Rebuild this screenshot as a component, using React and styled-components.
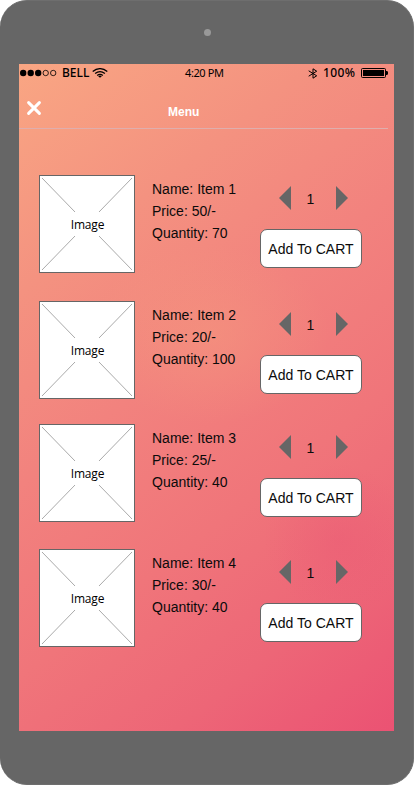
import React from "react";
import styled, { createGlobalStyle } from "styled-components";

const GlobalStyle = createGlobalStyle`
  * { box-sizing: border-box; }
  body {
    margin: 0;
    background: #fff;
    font-family: "Liberation Sans", Arial, sans-serif;
    color: #0b0b0b;
  }
  button { font: inherit; color: inherit; padding: 0; border: 0; background: none; }
`;

const Phone = styled.main`
  width: 414px;
  height: 785px;
  padding: 0 18px 0 19px;
  border: 1px solid #6e6e6e;
  border-width: 1px 1px 1px 0;
  border-radius: 27px;
  background: #666;
`;

const Bezel = styled.div`
  height: 63px;
  display: flex;
  justify-content: center;
  padding-top: 28px;
`;

const Camera = styled.span`
  width: 7px;
  height: 7px;
  border-radius: 50%;
  background: #999;
`;

const Screen = styled.div`
  width: 375px;
  height: 667px;
  overflow: hidden;
  background:
    radial-gradient(ellipse 75px 75px at 320px 475px, rgba(232, 75, 115, 0.25), transparent),
    radial-gradient(ellipse 120px 90px at 190px 270px, rgba(245, 153, 125, 0.5), transparent),
    linear-gradient(142deg, #f9a683 0%, #f49280 24%, #f2827e 44%, #f0757a 64%, #ed6677 82%, #eb5273 100%);
`;

const StatusBar = styled.header`
  height: 18px;
  display: grid;
  grid-template-columns: 165px 1fr auto;
  align-items: center;
  padding: 0 6px 0 1px;
  font-family: "Noto Sans", "Open Sans", sans-serif;
  color: #000;
`;

const StatusGroup = styled.div`
  display: flex;
  align-items: center;
  svg { display: block; flex: none; }
`;

const StatusText = styled.span`
  width: ${(p) => p.$width}px;
  margin-left: ${(p) => p.$gap || 0}px;
  font-size: ${(p) => p.$size}px;
  font-weight: ${(p) => p.$weight || 400};
  letter-spacing: ${(p) => p.$tracking || 0}px;
  line-height: 18px;
  white-space: nowrap;
`;

const NavBar = styled.nav`
  width: 369px;
  height: 47px;
  display: grid;
  grid-template-columns: 149px 1fr;
  align-items: start;
  border-bottom: 1px solid #dfaead;
`;

const CloseButton = styled.button`
  width: 16px;
  height: 16px;
  margin: 18px 0 0 7px;
  svg { display: block; }
`;

const Title = styled.h1`
  margin: 23px 0 0;
  font-size: 12px;
  line-height: 14px;
  font-weight: 700;
  color: #fff;
`;

const List = styled.ul`
  margin: 0;
  padding: 46px 32px 0 20px;
  list-style: none;
`;

const Row = styled.li`
  display: grid;
  grid-template-columns: 113px 108px 102px;
  height: ${(p) => p.$height}px;
  align-items: start;
`;

const Thumb = styled.div`
  width: 96px;
  height: 98px;
  display: grid;
  place-items: center;
  border: 1px solid #666;
  background: #fff;
  > * { grid-area: 1 / 1; }
`;

const ThumbLabel = styled.span`
  padding: 2px 0 0 1px;
  font: 12px/16px "Open Sans", "Noto Sans", sans-serif;
  letter-spacing: -0.2px;
  color: #000;
`;

const Details = styled.div`
  padding-top: 3px;
  font-size: 14px;
  line-height: 22px;
  white-space: nowrap;
`;

const Actions = styled.div`
  padding-top: 11px;
`;

const Stepper = styled.div`
  display: grid;
  grid-template-columns: 12px 1fr 12px;
  align-items: start;
  height: 24px;
  margin: 0 14px 0 19px;
  font-size: 14px;
  text-align: center;
  svg { display: block; }
`;

const Count = styled.span`
  line-height: 26px;
  padding-right: 6px;
`;

const CartButton = styled.button`
  && {
    width: 102px;
    height: 39px;
    margin-top: 19px;
    padding-top: 1px;
    border: 1px solid #666;
    border-radius: 7px;
    background: #fff;
    font-size: 14px;
    line-height: 36px;
    letter-spacing: 0.03px;
    white-space: nowrap;
  }
`;

const items = [
  { name: "Item 1", price: "50/-", quantity: 70, height: 126 },
  { name: "Item 2", price: "20/-", quantity: 100, height: 123 },
  { name: "Item 3", price: "25/-", quantity: 40, height: 125 },
  { name: "Item 4", price: "30/-", quantity: 40, height: 98 },
];

const Signal = () => (
  <svg width="38" height="8" viewBox="0 0 38 8">
    {[3.2, 10.7, 18.2].map((x) => <circle key={x} cx={x} cy="4" r="3.2" />)}
    {[25.7, 33.2].map((x) => (
      <circle key={x} cx={x} cy="4" r="2.7" fill="none" stroke="#000" strokeWidth="0.8" />
    ))}
  </svg>
);

const Wifi = () => (
  <svg width="16" height="10" viewBox="0 0 16 10" fill="none" stroke="#000" strokeWidth="1.3">
    <path d="M.7 3.5Q8-2.2 15.3 3.5M3.1 5.6Q8 1.7 12.9 5.6M5.2 7.6Q8 5.2 10.8 7.6" />
    <path d="M6.2 8.2Q8 6.8 9.8 8.2L8 9.8Z" fill="#000" stroke="none" />
  </svg>
);

const Bluetooth = () => (
  <svg width="10" height="11" viewBox="0 0 10 11" fill="none" stroke="#000" strokeWidth="1">
    <path d="M.7 2.8L8.7 7.8L5 10.2V.8L8.7 3.2L.7 8.2" />
  </svg>
);

const Battery = () => (
  <svg width="27" height="10" viewBox="0 0 27 10">
    <rect x=".5" y=".5" width="24" height="9" rx="1" fill="none" stroke="#000" />
    <rect x="2" y="2" width="21" height="6" />
    <path d="M25 3h1.2l.8 1v2l-.8 1H25z" />
  </svg>
);

const Arrow = ({ right }) => (
  <svg width="12" height="24" viewBox="0 0 12 24">
    <path d={right ? "M0 0L12 12L0 24Z" : "M12 0L0 12L12 24Z"} fill="#666" />
  </svg>
);

const Cross = () => (
  <svg width="94" height="96" viewBox="0 0 94 96" stroke="#aaa" strokeWidth="1">
    <path d="M2 2L35 36M92 2L59 36M2 94L35 60M92 94L59 60" />
  </svg>
);

function MenuItem({ item }) {
  return (
    <Row $height={item.height}>
      <Thumb>
        <Cross />
        <ThumbLabel>Image</ThumbLabel>
      </Thumb>
      <Details>
        <div>Name: {item.name}</div>
        <div>Price: {item.price}</div>
        <div>Quantity: {item.quantity}</div>
      </Details>
      <Actions>
        <Stepper>
          <button aria-label="Decrease"><Arrow /></button>
          <Count>1</Count>
          <button aria-label="Increase"><Arrow right /></button>
        </Stepper>
        <CartButton>Add To CART</CartButton>
      </Actions>
    </Row>
  );
}

export default function App() {
  return (
    <>
      <GlobalStyle />
      <Phone>
        <Bezel><Camera /></Bezel>
        <Screen>
          <StatusBar>
            <StatusGroup>
              <Signal />
              <StatusText $gap={4} $width={30} $size={12} $weight={500}>BELL</StatusText>
              <Wifi />
            </StatusGroup>
            <StatusText $width={60} $size={11} $tracking={-0.4}>4:20 PM</StatusText>
            <StatusGroup>
              <Bluetooth />
              <StatusText $gap={5} $width={38} $size={12} $weight={500} $tracking={0.4}>100%</StatusText>
              <Battery />
            </StatusGroup>
          </StatusBar>
          <NavBar>
            <CloseButton aria-label="Close">
              <svg width="16" height="16" viewBox="0 0 16 16">
                <path d="M2.6 2.6L13.4 13.4M13.4 2.6L2.6 13.4" stroke="#fff" strokeWidth="3" strokeLinecap="round" />
              </svg>
            </CloseButton>
            <Title>Menu</Title>
          </NavBar>
          <List>
            {items.map((item) => <MenuItem key={item.name} item={item} />)}
          </List>
        </Screen>
      </Phone>
    </>
  );
}
